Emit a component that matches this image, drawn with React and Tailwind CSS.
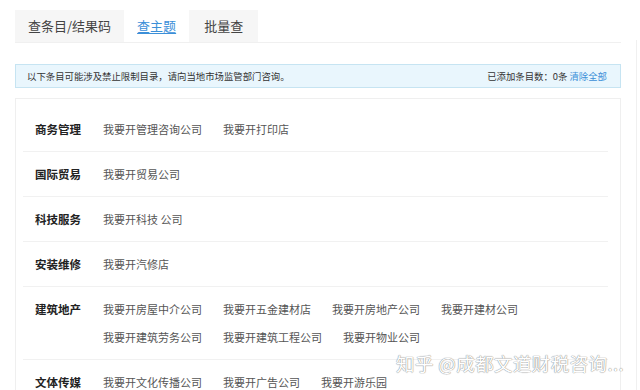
import React from "react";

const rows = [
  { label: "商务管理", items: ["我要开管理咨询公司", "我要开打印店"] },
  { label: "国际贸易", items: ["我要开贸易公司"] },
  { label: "科技服务", items: ["我要开科技 公司"] },
  { label: "安装维修", items: ["我要开汽修店"] },
  {
    label: "建筑地产",
    items: [
      "我要开房屋中介公司",
      "我要开五金建材店",
      "我要开房地产公司",
      "我要开建材公司",
      "我要开建筑劳务公司",
      "我要开建筑工程公司",
      "我要开物业公司",
    ],
  },
  { label: "文体传媒", items: ["我要开文化传播公司", "我要开广告公司", "我要开游乐园"] },
];

export default function App() {
  return (
    <div className="relative w-[640px] h-[390px] overflow-hidden bg-white font-['Noto_Sans_CJK_SC','Noto_Sans',sans-serif]">
      <div className="pl-[15px] pr-[19px] pt-[10px]">
        {/* Tabs */}
        <div className="flex h-[33px] border-b border-[#f0f0f0]">
          <div className="flex items-center h-[32px] px-[13px] bg-[#f6f6f6] text-[13px] text-[#444]">查条目/结果码</div>
          <div className="flex items-center h-[32px] px-[13px] bg-white text-[13px] text-[#3b8fd8] underline underline-offset-2">查主题</div>
          <div className="flex items-center h-[32px] px-[15px] bg-[#f6f6f6] text-[13px] text-[#444]">批量查</div>
        </div>

        {/* Alert */}
        <div className="mt-[21px] flex items-center justify-between h-[24px] pl-[11px] pr-[13px] bg-[#e9f6fd] border border-[#c6e4f2] text-[9.4px] text-[#333]">
          <span>以下条目可能涉及禁止限制目录，请向当地市场监管部门咨询。</span>
          <span>
            已添加条目数：0条 <span className="text-[#3b8fd8]">清除全部</span>
          </span>
        </div>

        {/* Card */}
        <div className="mt-[10px] border border-[#efefef] pt-[8px] pl-[7px] pr-[12px]">
          {rows.map((r) => (
            <div key={r.label} className="flex items-start py-[8px] border-b border-[#f1f1f1]">
              <div className="w-[80px] pl-[12px] shrink-0 leading-[28px] text-[11.5px] font-bold text-[#222]">{r.label}</div>
              <div className="flex flex-wrap gap-x-[21px] max-w-[440px]">
                {r.items.map((it) => (
                  <span key={it} className="leading-[28px] text-[11px] text-[#555]">{it}</span>
                ))}
              </div>
            </div>
          ))}
        </div>
      </div>

      {/* right edge strip */}
      <div className="absolute right-[3px] top-[40px] bottom-0 w-px bg-[#f0f0f0]" />

      {/* watermark */}
      <div className="absolute left-[396px] top-[350px] text-[18.5px] leading-[26px] tracking-[0.4px] text-white whitespace-nowrap [text-shadow:0_0_1px_#8a8a8a,0_0_1px_#8a8a8a]">
        知乎 @成都文道财税咨询...
      </div>
    </div>
  );
}
